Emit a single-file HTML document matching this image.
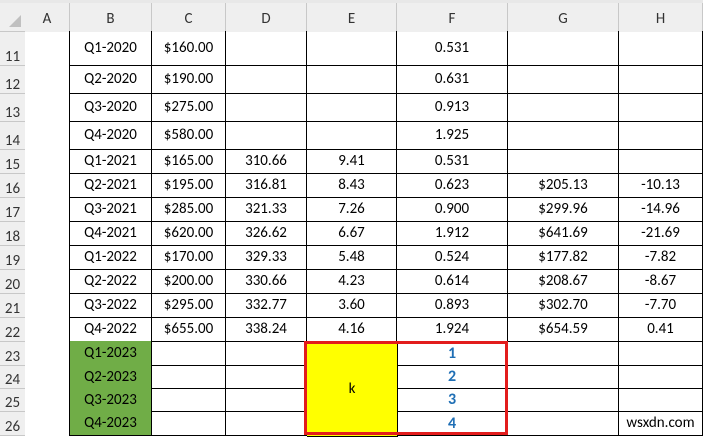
<!DOCTYPE html><html><head><style>
body{margin:0;width:703px;height:436px;overflow:hidden;background:#fff;font-family:Calibri,"Carlito","Liberation Sans",sans-serif;position:relative}
.a{position:absolute;box-sizing:border-box}
.h{background:#efefef;color:#333;font-size:15px;text-align:center}
.c{font-size:15px;text-align:center;color:#000;border-right:1px solid #000;border-bottom:1px solid #000;display:flex;align-items:center;justify-content:center}
</style></head><body>
<div class="a" style="left:0;top:0;width:703px;height:3px;background:#e8e8e8"></div>
<div class="a h" style="left:0;top:3px;width:703px;height:29px;border-bottom:1px solid #c8c8c8"></div>
<div class="a h" style="left:0;top:32px;width:25px;height:404px;border-right:1px solid #c8c8c8"></div>
<svg class="a" style="left:8px;top:14px" width="14" height="14"><polygon points="13,1 13,13 1,13" fill="#c0c0c0"/></svg>
<div id="g"></div>
<script>
var cols=[25,70,152,226,307,397,508,619,703],L="ABCDEFGH";
var rows=[32,66,94,122,150,174,198,222,246,270,294,318,342,366,389,412,436];
var h='';
for(var i=0;i<8;i++)h+='<div class="a h" style="left:'+cols[i]+'px;top:3px;width:'+(cols[i+1]-cols[i])+'px;height:29px;line-height:32px;border-right:1px solid #c8c8c8">'+L[i]+'</div>';
for(var r=0;r<16;r++){var t=rows[r],hh=rows[r+1]-t;h+='<div class="a h" style="left:0;top:'+t+'px;width:25px;height:'+hh+'px;border-bottom:1px solid #c8c8c8;padding-top:'+(hh-18)+'px">'+(11+r)+'</div>';}
var d=[
["Q1-2020","$160.00","","","0.531","",""],
["Q2-2020","$190.00","","","0.631","",""],
["Q3-2020","$275.00","","","0.913","",""],
["Q4-2020","$580.00","","","1.925","",""],
["Q1-2021","$165.00","310.66","9.41","0.531","",""],
["Q2-2021","$195.00","316.81","8.43","0.623","$205.13","-10.13"],
["Q3-2021","$285.00","321.33","7.26","0.900","$299.96","-14.96"],
["Q4-2021","$620.00","326.62","6.67","1.912","$641.69","-21.69"],
["Q1-2022","$170.00","329.33","5.48","0.524","$177.82","-7.82"],
["Q2-2022","$200.00","330.66","4.23","0.614","$208.67","-8.67"],
["Q3-2022","$295.00","332.77","3.60","0.893","$302.70","-7.70"],
["Q4-2022","$655.00","338.24","4.16","1.924","$654.59","0.41"],
["Q1-2023","","","","1","",""],
["Q2-2023","","","","2","",""],
["Q3-2023","","","","3","",""],
["Q4-2023","","","","4","",""]];
for(var r=0;r<16;r++){var t=rows[r]-1,hh=rows[r+1]-rows[r]+1;
 for(var c=0;c<7;c++){var x=cols[c+1]-(c==0?1:0),w=cols[c+2]-x;var st='';var txt=d[r][c];
  if(r>=12&&c==0)st='background:#70ad47;';
  if(r>=12&&c==3)continue;
  if(r>=12&&c==4)st+='color:#1f6fb5;font-weight:bold;font-size:16px;';
  if(r==15&&c==6)txt='wsxdn.com';
  h+='<div class="a c" style="left:'+x+'px;top:'+t+'px;width:'+w+'px;height:'+hh+'px;'+(c==0?'border-left:1px solid #000;':'')+st+'">'+txt+'</div>';}}
h+='<div class="a c" style="left:307px;top:341px;width:91px;height:96px;background:#ffff00">k</div>';
h+='<div class="a" style="left:304px;top:341px;width:204px;height:94px;border:3px solid #e21c1c"></div>';
document.getElementById('g').innerHTML=h;
</script>
</body></html>
